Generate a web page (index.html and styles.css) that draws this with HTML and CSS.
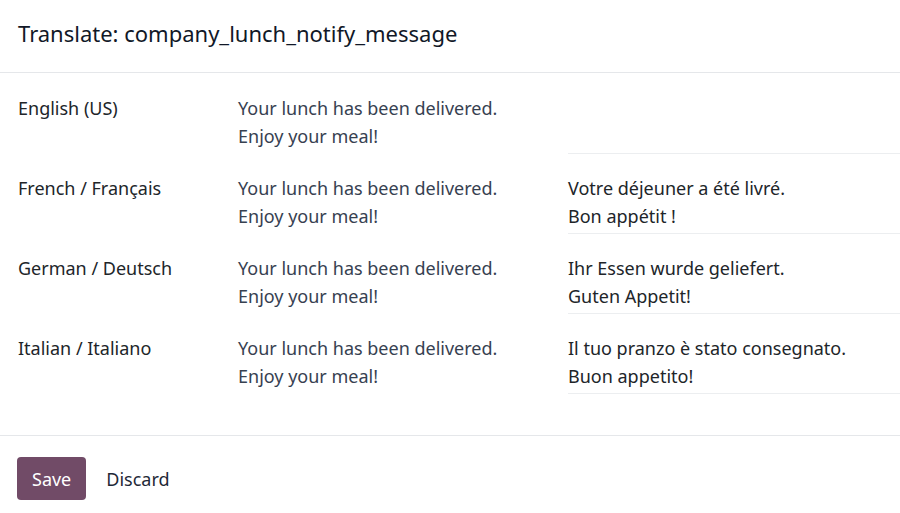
FILE: index.html
```html
<!DOCTYPE html>
<html>
<head>
<meta charset="utf-8">
<link rel="stylesheet" href="styles.css">
</head>
<body>
<div class="dialog">
  <header class="head">
    <h1 class="title">Translate: company_lunch_notify_message</h1>
  </header>
  <main class="body">
    <div class="row">
      <div class="lang">English (US)</div>
      <div class="src">Your lunch has been delivered.<br>Enjoy your meal!</div>
      <div class="tr"></div>
    </div>
    <div class="row">
      <div class="lang">French / Français</div>
      <div class="src">Your lunch has been delivered.<br>Enjoy your meal!</div>
      <div class="tr">Votre déjeuner a été livré.<br>Bon appétit !</div>
    </div>
    <div class="row">
      <div class="lang">German / Deutsch</div>
      <div class="src">Your lunch has been delivered.<br>Enjoy your meal!</div>
      <div class="tr">Ihr Essen wurde geliefert.<br>Guten Appetit!</div>
    </div>
    <div class="row">
      <div class="lang">Italian / Italiano</div>
      <div class="src">Your lunch has been delivered.<br>Enjoy your meal!</div>
      <div class="tr">Il tuo pranzo è stato consegnato.<br>Buon appetito!</div>
    </div>
  </main>
  <footer class="foot">
    <button class="btn btn-primary">Save</button>
    <button class="btn btn-link">Discard</button>
  </footer>
</div>
</body>
</html>
```
FILE: styles.css
```css
* { box-sizing: border-box; }
html, body { margin: 0; padding: 0; background: #fff; }
body {
  font-family: "Noto Sans", "DejaVu Sans", sans-serif;
  font-size: 18px;
  color: #212529;
}
.dialog { width: 900px; }
.head {
  height: 73px;
  padding: 18px 18px 0;
  border-bottom: 1px solid #e5e7ea;
}
.title {
  margin: 0;
  font-size: 22px;
  line-height: 30px;
  font-weight: 400;
  color: #111827;
}
.body {
  padding: 21px 0 41px 18px;
  display: flex;
  flex-direction: column;
  gap: 20px;
  border-bottom: 1px solid #e5e7ea;
}
.row {
  display: grid;
  grid-template-columns: 220px 330px 1fr;
  line-height: 28px;
}
.lang { color: #212529; }
.src { color: #374151; }
.tr {
  height: 60px;
  border-bottom: 1px solid #eceef0;
  color: #212529;
}
.foot {
  padding: 21px 17px;
  display: flex;
  align-items: center;
  gap: 6px;
}
.btn {
  font-family: inherit;
  font-size: 18px;
  border: 0;
  border-radius: 4px;
  height: 43px;
  padding: 0 15px;
  cursor: pointer;
}
.btn-primary { background: #714b67; color: #fff; }
.btn-link { background: transparent; color: #1f2937; padding: 0 14px; }
```
